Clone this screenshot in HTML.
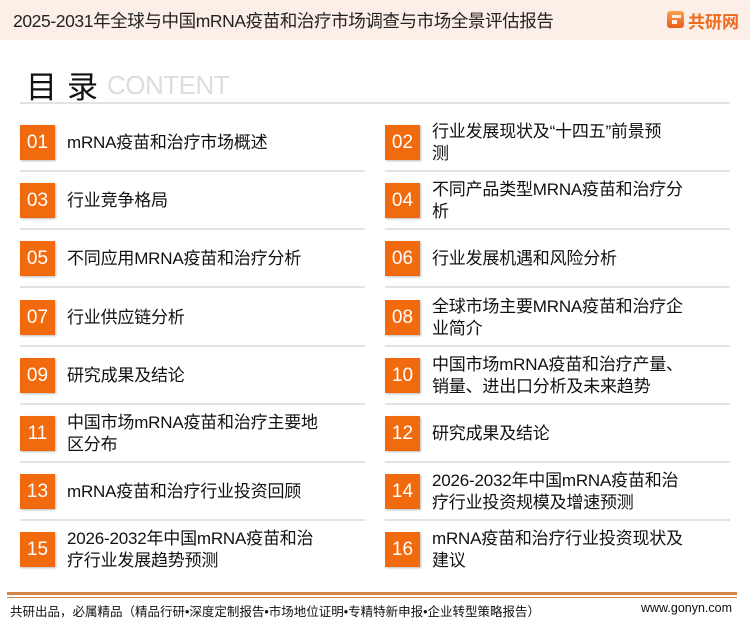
<!DOCTYPE html>
<html><head><meta charset="utf-8"><style>
*{margin:0;padding:0;box-sizing:border-box}
body{width:750px;height:622px;background:#fff;font-family:"Liberation Sans","Noto Sans CJK SC",sans-serif;position:relative;overflow:hidden;color:#111}
.hd{position:absolute;left:0;top:0;width:750px;height:40px;background:#fcefe7}
.hd .t{position:absolute;left:13px;top:8px;font-size:17.5px;color:#222;letter-spacing:-0.4px}
.logo{position:absolute;left:667px;top:11px;width:17px;height:17px;border-radius:3px;background:linear-gradient(#f9a24a,#ee5a17)}
.logo:after{content:"";position:absolute;left:5px;top:4px;width:9px;height:3px;background:#fcefe7}
.logo:before{content:"";position:absolute;left:5px;top:9px;width:5px;height:4px;background:#fcefe7}
.lt{position:absolute;left:688px;top:8px;font-size:17px;font-weight:bold;color:#ef6a1c}
.ml{position:absolute;left:26px;top:62px;font-size:31px;color:#111;letter-spacing:10px}
.ct{position:absolute;left:107px;top:70px;font-size:26px;color:#ddd;letter-spacing:-0.5px}
.hl{position:absolute;left:20px;top:102px;width:710px;height:2px;background:#e3e3e3}
.bx{position:absolute;width:35px;height:35px;background:#f26a0e;color:#fff;font-size:19px;text-align:center;line-height:35px;box-shadow:1px 1px 2px #bbb}
.tx{position:absolute;font-size:17px;line-height:22px;color:#111;letter-spacing:-0.2px}
.sp{position:absolute;height:2px;background:#e3e3e3}
.f1{position:absolute;left:7px;top:592px;width:730px;height:3px;background:#d98447}
.f2{position:absolute;left:7px;top:597px;width:730px;height:1px;background:#d98447}
.ft{position:absolute;left:10px;top:601px;font-size:12.5px;color:#111}
.fw{position:absolute;left:641px;top:601px;font-size:12.5px;color:#111}
</style></head><body>
<div class="hd"><div class="t">2025-2031年全球与中国mRNA疫苗和治疗市场调查与市场全景评估报告</div><div class="logo"></div><div class="lt">共研网</div></div>
<div class="ml">目录</div><div class="ct">CONTENT</div>
<div class="hl"></div>

<div class="bx" style="left:20px;top:125px">01</div><div class="tx" style="left:67px;top:132px">mRNA疫苗和治疗市场概述</div>
<div class="bx" style="left:385px;top:125px">02</div><div class="tx" style="left:432px;top:121px">行业发展现状及“十四五”前景预<br>测</div>
<div class="bx" style="left:20px;top:183px">03</div><div class="tx" style="left:67px;top:190px">行业竞争格局</div>
<div class="bx" style="left:385px;top:183px">04</div><div class="tx" style="left:432px;top:179px">不同产品类型MRNA疫苗和治疗分<br>析</div>
<div class="bx" style="left:20px;top:241px">05</div><div class="tx" style="left:67px;top:248px">不同应用MRNA疫苗和治疗分析</div>
<div class="bx" style="left:385px;top:241px">06</div><div class="tx" style="left:432px;top:248px">行业发展机遇和风险分析</div>
<div class="bx" style="left:20px;top:300px">07</div><div class="tx" style="left:67px;top:307px">行业供应链分析</div>
<div class="bx" style="left:385px;top:300px">08</div><div class="tx" style="left:432px;top:296px">全球市场主要MRNA疫苗和治疗企<br>业简介</div>
<div class="bx" style="left:20px;top:358px">09</div><div class="tx" style="left:67px;top:365px">研究成果及结论</div>
<div class="bx" style="left:385px;top:358px">10</div><div class="tx" style="left:432px;top:354px">中国市场mRNA疫苗和治疗产量、<br>销量、进出口分析及未来趋势</div>
<div class="bx" style="left:20px;top:416px">11</div><div class="tx" style="left:67px;top:412px">中国市场mRNA疫苗和治疗主要地<br>区分布</div>
<div class="bx" style="left:385px;top:416px">12</div><div class="tx" style="left:432px;top:423px">研究成果及结论</div>
<div class="bx" style="left:20px;top:474px">13</div><div class="tx" style="left:67px;top:481px">mRNA疫苗和治疗行业投资回顾</div>
<div class="bx" style="left:385px;top:474px">14</div><div class="tx" style="left:432px;top:470px">2026-2032年中国mRNA疫苗和治<br>疗行业投资规模及增速预测</div>
<div class="bx" style="left:20px;top:532px">15</div><div class="tx" style="left:67px;top:528px">2026-2032年中国mRNA疫苗和治<br>疗行业发展趋势预测</div>
<div class="bx" style="left:385px;top:532px">16</div><div class="tx" style="left:432px;top:528px">mRNA疫苗和治疗行业投资现状及<br>建议</div>

<div class="sp" style="left:20px;top:170px;width:345px"></div><div class="sp" style="left:385px;top:170px;width:345px"></div>
<div class="sp" style="left:20px;top:228px;width:345px"></div><div class="sp" style="left:385px;top:228px;width:345px"></div>
<div class="sp" style="left:20px;top:286px;width:345px"></div><div class="sp" style="left:385px;top:286px;width:345px"></div>
<div class="sp" style="left:20px;top:345px;width:345px"></div><div class="sp" style="left:385px;top:345px;width:345px"></div>
<div class="sp" style="left:20px;top:403px;width:345px"></div><div class="sp" style="left:385px;top:403px;width:345px"></div>
<div class="sp" style="left:20px;top:461px;width:345px"></div><div class="sp" style="left:385px;top:461px;width:345px"></div>
<div class="sp" style="left:20px;top:519px;width:345px"></div><div class="sp" style="left:385px;top:519px;width:345px"></div>

<div class="f1"></div><div class="f2"></div>
<div class="ft">共研出品，必属精品（精品行研•深度定制报告•市场地位证明•专精特新申报•企业转型策略报告）</div>
<div class="fw">www.gonyn.com</div>
</body></html>
